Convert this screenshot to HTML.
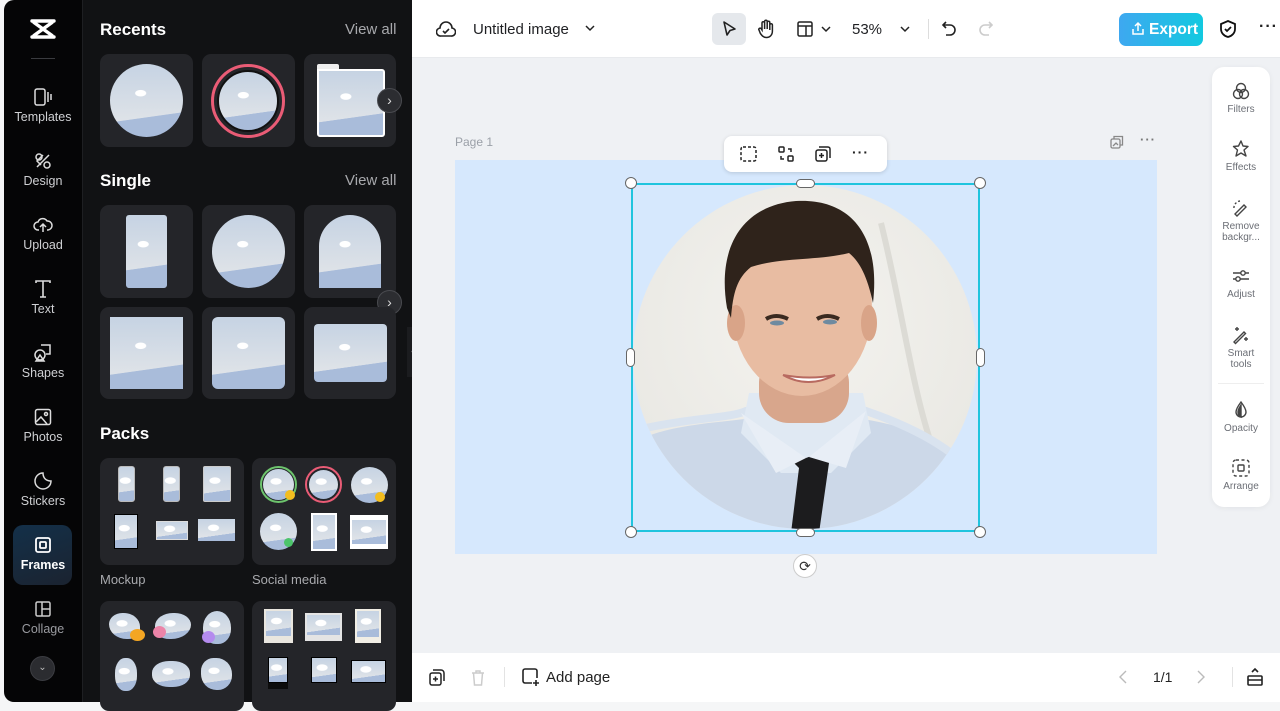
<!DOCTYPE html>
<html><head><meta charset="utf-8"><style>
*{box-sizing:border-box;margin:0;padding:0}
body{width:1280px;height:702px;overflow:hidden;background:#f5f6f7;font-family:"Liberation Sans",sans-serif;position:relative}
.abs{position:absolute}
#nav{left:4px;top:0;width:78px;height:702px;background:#050506;border-radius:10px 0 0 10px}
#panel{left:82px;top:0;width:330px;height:702px;background:#111214;border-left:1px solid #1e1f22}
.ni{position:absolute;left:0;width:78px;text-align:center;color:#cfd0d3;font-size:12.5px}
.ni svg{display:block;margin:0 auto 3px}
.card{position:absolute;background:#242529;border-radius:9px}
.sky{position:absolute;background:radial-gradient(ellipse 6px 3.5px at 42% 40%,#fff 85%,transparent 100%),linear-gradient(172deg,transparent 70%,#a9bcda 70.5%),linear-gradient(#c6d3e3,#e5e7e9);}
h2{position:absolute;color:#fff;font-size:17px;font-weight:bold}
.va{position:absolute;color:#a8a9ad;font-size:15px}
.arrow{position:absolute;width:25px;height:25px;border-radius:50%;background:#2c2d31;border:1px solid #4a4b50;color:#ddd;font-size:14px;text-align:center;line-height:22px}
#top{left:412px;top:0;width:868px;height:58px;background:#fff;border-bottom:1px solid #e8eaed}
#canvas{left:412px;top:58px;width:868px;height:595px;background:#eff1f4}
#bottom{left:412px;top:653px;width:868px;height:49px;background:#fff}
.rp{position:absolute;left:0;width:58px;text-align:center;font-size:10px;color:#6b6e75;line-height:11px}
.rp svg{display:block;margin:0 auto 3px}
.h{position:absolute;width:12px;height:12px;border-radius:50%;background:#fff;border:1px solid #666}
</style></head><body>

<div id="nav" class="abs">
  <svg class="abs" style="left:25px;top:18px" width="28" height="22" viewBox="0 0 28 22"><path d="M3 3h22M3 19h22M5 4.5L23 17.5M23 4.5L5 17.5" fill="none" stroke="#fff" stroke-width="3.4" stroke-linecap="round"/></svg>
  <div class="abs" style="left:27px;top:58px;width:24px;height:1px;background:#3a3b3f"></div>
  <div class="ni" style="top:87px"><svg width="20" height="20" viewBox="0 0 20 20" fill="none" stroke="#ddd" stroke-width="1.5"><rect x="2" y="2" width="10" height="16" rx="2"/><path d="M15 5v10M18 7v6"/></svg>Templates</div>
  <div class="ni" style="top:151px"><svg width="20" height="20" viewBox="0 0 20 20" fill="none" stroke="#ddd" stroke-width="1.5"><circle cx="6" cy="6" r="3"/><circle cx="14" cy="14" r="3"/><path d="M4 16L16 4M8 14l-4-4 6-6"/></svg>Design</div>
  <div class="ni" style="top:215px"><svg width="20" height="20" viewBox="0 0 20 20" fill="none" stroke="#ddd" stroke-width="1.5"><path d="M6 15H5a4 4 0 010-8 5 5 0 019-1 4 4 0 011 9h-1M10 17v-7M7 12l3-3 3 3"/></svg>Upload</div>
  <div class="ni" style="top:279px"><svg width="20" height="20" viewBox="0 0 20 20" fill="none" stroke="#ddd" stroke-width="1.6"><path d="M3 4V2h14v2M10 2v16M7 18h6"/></svg>Text</div>
  <div class="ni" style="top:343px"><svg width="20" height="20" viewBox="0 0 20 20" fill="none" stroke="#ddd" stroke-width="1.5"><circle cx="7" cy="12" r="5"/><path d="M8 2h9v9h-4M3 18l4-6 4 6z"/></svg>Shapes</div>
  <div class="ni" style="top:407px"><svg width="20" height="20" viewBox="0 0 20 20" fill="none" stroke="#ddd" stroke-width="1.5"><rect x="2.5" y="2.5" width="15" height="15" rx="2"/><circle cx="13" cy="7" r="1.5"/><path d="M3 15l5-5 6 7"/></svg>Photos</div>
  <div class="ni" style="top:471px"><svg width="20" height="20" viewBox="0 0 20 20" fill="none" stroke="#ddd" stroke-width="1.5"><path d="M10 2a8 8 0 108 8c-5 0-8-3-8-8z"/></svg>Stickers</div>
  <div class="abs" style="left:9px;top:525px;width:59px;height:60px;border-radius:10px;background:linear-gradient(160deg,#133049,#1b2330)"></div>
  <div class="ni" style="top:535px;color:#fff;font-weight:bold"><svg width="20" height="20" viewBox="0 0 20 20" fill="none" stroke="#fff" stroke-width="1.8"><rect x="3" y="3" width="14" height="14" rx="2"/><rect x="7" y="7" width="6" height="6" rx="1"/></svg>Frames</div>
  <div class="ni" style="top:599px;color:#9a9ba0"><svg width="20" height="20" viewBox="0 0 20 20" fill="none" stroke="#ccc" stroke-width="1.5"><rect x="3" y="3" width="14" height="14" rx="1.5"/><path d="M9 3v14M9 10h8"/></svg>Collage</div>
  <div class="abs" style="left:26px;top:656px;width:25px;height:25px;border-radius:50%;background:#2b2c30;border:1px solid #3c3d42;color:#bbb;font-size:10px;text-align:center;line-height:22px">&#8964;</div>
</div>

<div id="panel" class="abs">
  <h2 style="left:17px;top:20px">Recents</h2><div class="va" style="left:262px;top:21px">View all</div>
  <div class="card" style="left:17px;top:54px;width:93px;height:93px"><div class="sky" style="left:10px;top:10px;width:73px;height:73px;border-radius:50%"></div></div>
  <div class="card" style="left:119px;top:54px;width:93px;height:93px"><div style="position:absolute;left:9px;top:10px;width:74px;height:74px;border-radius:50%;border:3px solid #ea5c76"></div><div class="sky" style="left:15px;top:16px;width:62px;height:62px;border-radius:50%;border:2px solid #111"></div></div>
  <div class="card" style="left:221px;top:54px;width:92px;height:93px"><div style="position:absolute;left:13px;top:10px;width:22px;height:6px;background:#eee;border-radius:2px 2px 0 0"></div><div class="sky" style="left:13px;top:15px;width:68px;height:68px;border:2px solid #fff;border-radius:0 3px 3px 3px"></div></div>
  <div class="arrow" style="left:294px;top:88px">&#8250;</div>

  <h2 style="left:17px;top:171px">Single</h2><div class="va" style="left:262px;top:172px">View all</div>
  <div class="card" style="left:17px;top:205px;width:93px;height:93px"><div class="sky" style="top:10px;width:41px;height:73px;border-radius:3px;left:26px"></div></div>
  <div class="card" style="left:119px;top:205px;width:93px;height:93px"><div class="sky" style="left:10px;top:10px;width:73px;height:73px;border-radius:50%"></div></div>
  <div class="card" style="left:221px;top:205px;width:92px;height:93px"><div class="sky" style="left:15px;top:10px;width:62px;height:73px;border-radius:31px 31px 0 0"></div></div>
  <div class="arrow" style="left:294px;top:290px">&#8250;</div>
  <div class="card" style="left:17px;top:307px;width:93px;height:92px"><div class="sky" style="left:10px;top:10px;width:73px;height:72px"></div></div>
  <div class="card" style="left:119px;top:307px;width:93px;height:92px"><div class="sky" style="left:10px;top:10px;width:73px;height:72px;border-radius:6px"></div></div>
  <div class="card" style="left:221px;top:307px;width:92px;height:92px"><div class="sky" style="left:10px;top:17px;width:73px;height:58px;border-radius:4px"></div></div>

  <h2 style="left:17px;top:424px">Packs</h2>
  <div class="card" style="left:17px;top:458px;width:144px;height:107px">
    <div class="sky" style="left:18px;top:8px;width:17px;height:36px;border:1px solid #bbb;border-radius:3px"></div>
    <div class="sky" style="left:63px;top:8px;width:17px;height:36px;border:1px solid #bbb;border-radius:3px"></div>
    <div class="sky" style="left:103px;top:8px;width:28px;height:36px;border:1px solid #ccc;border-radius:2px"></div>
    <div class="sky" style="left:14px;top:56px;width:24px;height:35px;border:1px solid #000"></div>
    <div class="sky" style="left:56px;top:63px;width:32px;height:19px;border:1px solid #ddd"></div>
    <div class="sky" style="left:98px;top:61px;width:37px;height:22px"></div>
  </div>
  <div class="card" style="left:169px;top:458px;width:144px;height:107px">
    <div style="position:absolute;left:8px;top:8px;width:37px;height:37px;border-radius:50%;border:2px solid #6dc46d"></div><div class="sky" style="left:11px;top:11px;width:31px;height:31px;border-radius:50%"></div><div class="abs" style="left:33px;top:32px;width:10px;height:10px;border-radius:50%;background:#f3bd1f"></div>
    <div style="position:absolute;left:53px;top:8px;width:37px;height:37px;border-radius:50%;border:2px solid #ea5c76"></div><div class="sky" style="left:57px;top:12px;width:29px;height:29px;border-radius:50%"></div>
    <div class="sky" style="left:99px;top:9px;width:37px;height:36px;border-radius:50%"></div><div class="abs" style="left:123px;top:34px;width:10px;height:10px;border-radius:50%;background:#f3bd1f"></div>
    <div class="sky" style="left:8px;top:55px;width:37px;height:37px;border-radius:50%"></div><div class="abs" style="left:32px;top:80px;width:9px;height:9px;border-radius:50%;background:#4cc46a"></div>
    <div class="sky" style="left:59px;top:55px;width:26px;height:38px;border:2px solid #fff"></div>
    <div class="sky" style="left:98px;top:57px;width:38px;height:34px;border:3px solid #fff;border-width:5px 2px 5px 2px"></div>
  </div>
  <div class="abs" style="left:17px;top:572px;color:#a8a9ad;font-size:13px">Mockup</div>
  <div class="abs" style="left:169px;top:572px;color:#a8a9ad;font-size:13px">Social media</div>
  <div class="card" style="left:17px;top:601px;width:144px;height:110px">
    <div class="sky" style="left:9px;top:12px;width:31px;height:26px;border-radius:45% 55% 40% 60%"></div><div class="abs" style="left:30px;top:28px;width:15px;height:12px;border-radius:50%;background:#f4a623"></div>
    <div class="sky" style="left:55px;top:12px;width:36px;height:26px;border-radius:50% 45% 55% 40%"></div><div class="abs" style="left:53px;top:25px;width:13px;height:12px;border-radius:50%;background:#ec84a8"></div>
    <div class="sky" style="left:103px;top:10px;width:28px;height:33px;border-radius:50% 50% 45% 45%"></div><div class="abs" style="left:102px;top:30px;width:13px;height:12px;border-radius:50%;background:#b48bee"></div>
    <div class="sky" style="left:15px;top:57px;width:22px;height:33px;border-radius:45%"></div>
    <div class="sky" style="left:52px;top:60px;width:38px;height:26px;border-radius:45%"></div>
    <div class="sky" style="left:101px;top:57px;width:31px;height:32px;border-radius:40% 50% 45% 50%"></div>
  </div>
  <div class="card" style="left:169px;top:601px;width:144px;height:110px">
    <div class="sky" style="left:12px;top:8px;width:29px;height:34px;border:2px solid #e9e6df;border-bottom-width:7px"></div>
    <div class="sky" style="left:53px;top:12px;width:37px;height:28px;border:2px solid #e4e4e4;border-bottom-width:6px"></div>
    <div class="sky" style="left:103px;top:8px;width:26px;height:34px;border:2px solid #f1eee5;border-bottom-width:6px"></div>
    <div class="sky" style="left:16px;top:56px;width:20px;height:26px;border:1px solid #000"></div><div class="abs" style="left:16px;top:82px;width:20px;height:6px;background:#0c0c0c"></div>
    <div class="sky" style="left:59px;top:56px;width:26px;height:26px;border:1px solid #000"></div>
    <div class="sky" style="left:99px;top:59px;width:35px;height:23px;border:1px solid #000"></div>
  </div>
</div>
<div class="abs" style="left:407px;top:327px;width:11px;height:50px;background:#1b1c1f;border-radius:0 6px 6px 0;color:#777;font-size:10px;line-height:50px;text-align:center">&#8249;</div>

<div id="top" class="abs">
  <svg class="abs" style="left:24px;top:20px" width="20" height="18" viewBox="0 0 20 18" fill="none" stroke="#222" stroke-width="1.6"><path d="M5 16a4 4 0 01-1-8 6 6 0 0112 0 4 4 0 01-1 8z"/><path d="M7 11l2 2 4-4"/></svg>
  <div class="abs" style="left:61px;top:21px;font-size:15px;color:#1f2023">Untitled image</div>
  <svg class="abs" style="left:173px;top:25px" width="10" height="7" viewBox="0 0 10 7" fill="none" stroke="#222" stroke-width="1.5"><path d="M1 1l4 4 4-4"/></svg>
  <div class="abs" style="left:300px;top:13px;width:34px;height:32px;border-radius:6px;background:#e5e8ec"></div>
  <svg class="abs" style="left:309px;top:20px" width="16" height="18" viewBox="0 0 16 18" fill="none" stroke="#222" stroke-width="1.6" stroke-linejoin="round"><path d="M3 2l11 7-5 1.5L6 15z"/></svg>
  <svg class="abs" style="left:345px;top:19px" width="18" height="20" viewBox="0 0 18 20" fill="none" stroke="#222" stroke-width="1.5"><path d="M5 11V4a1.3 1.3 0 012.6 0v6V2.5a1.3 1.3 0 012.6 0V10V3.5a1.3 1.3 0 012.6 0V11V6a1.3 1.3 0 012.6 0v6c0 4-2.5 6.5-6 6.5-3 0-4.5-2-6-4L2 11c-.8-1 .8-2.5 2-1.5z"/></svg>
  <svg class="abs" style="left:385px;top:21px" width="16" height="16" viewBox="0 0 16 16" fill="none" stroke="#222" stroke-width="1.5"><rect x="1" y="1" width="14" height="14" rx="1.5"/><path d="M1 5h14M9 5v10"/></svg>
  <svg class="abs" style="left:409px;top:26px" width="10" height="7" viewBox="0 0 10 7" fill="none" stroke="#222" stroke-width="1.5"><path d="M1 1l4 4 4-4"/></svg>
  <div class="abs" style="left:440px;top:21px;font-size:15px;color:#1f2023">53%</div>
  <svg class="abs" style="left:488px;top:26px" width="10" height="7" viewBox="0 0 10 7" fill="none" stroke="#222" stroke-width="1.5"><path d="M1 1l4 4 4-4"/></svg>
  <div class="abs" style="left:516px;top:19px;width:1px;height:20px;background:#ddd"></div>
  <svg class="abs" style="left:529px;top:20px" width="16" height="18" viewBox="0 0 16 18" fill="none" stroke="#222" stroke-width="1.6"><path d="M5 2L2 5l3 3M2 5h7a5 5 0 010 10H5"/></svg>
  <svg class="abs" style="left:566px;top:20px" width="16" height="18" viewBox="0 0 16 18" fill="none" stroke="#ccc" stroke-width="1.6"><path d="M11 2l3 3-3 3M14 5H7a5 5 0 000 10h4"/></svg>
  <div class="abs" style="left:707px;top:13px;width:84px;height:33px;border-radius:7px;background:linear-gradient(90deg,#3ea8f0,#12c9e0);color:#fff;font-weight:bold;font-size:15.5px;line-height:33px;padding-left:30px">Export</div>
  <svg class="abs" style="left:719px;top:21px" width="14" height="15" viewBox="0 0 14 15" fill="none" stroke="#fff" stroke-width="1.5"><path d="M7 10V2M4 5l3-3 3 3M2 8v5h10V8"/></svg>
  <svg class="abs" style="left:807px;top:19px" width="18" height="20" viewBox="0 0 18 20" fill="none" stroke="#111" stroke-width="1.8"><path d="M9 2l7 3v5c0 4-3 7-7 8-4-1-7-4-7-8V5z"/><path d="M6 10l2 2 4-4"/></svg>
  <div class="abs" style="left:847px;top:18px;font-size:16px;color:#222;letter-spacing:1px;font-weight:bold">···</div>
</div>

<div id="canvas" class="abs">
  <div class="abs" style="left:43px;top:77px;font-size:12px;color:#9ba0a8">Page 1</div>
  <svg class="abs" style="left:698px;top:77px" width="14" height="14" viewBox="0 0 14 14" fill="none" stroke="#888" stroke-width="1.3"><rect x="1" y="4" width="9" height="9" rx="1.5"/><path d="M4 4V1.5h8.5V10H10M3 11l3-3 2 2"/></svg>
  <div class="abs" style="left:728px;top:74px;font-size:13px;color:#777;font-weight:bold;letter-spacing:1px">···</div>
  <div class="abs" style="left:43px;top:102px;width:702px;height:394px;background:#d6e8fd"></div>
  <svg class="abs" style="left:219px;top:125px" width="349" height="349" viewBox="0 0 349 349">
    <defs><clipPath id="c"><circle cx="174" cy="174" r="172"/></clipPath>
    <radialGradient id="bg" cx="50%" cy="40%" r="60%"><stop offset="0" stop-color="#f4f3ef"/><stop offset="1" stop-color="#e9e8e3"/></radialGradient></defs>
    <g clip-path="url(#c)">
      <rect width="349" height="349" fill="url(#bg)"/>
      <path d="M250 40 C270 120 280 200 300 260" stroke="#dcdbd5" stroke-width="6" fill="none"/>
      <path d="M0 260 C40 240 90 240 120 235 L225 235 C260 240 300 250 330 275 L349 349 L0 349Z" fill="#ccd8e8"/>
      <path d="M15 245 C60 235 100 235 115 228 L235 228 C270 240 300 255 320 270" stroke="#d9e3ef" stroke-width="8" fill="none"/>
      <path d="M118 210 L232 210 L240 250 L200 290 L150 290 L110 250Z" fill="#e0e9f3"/>
      <rect x="128" y="170" width="90" height="70" rx="30" fill="#d8a68c"/>
      <ellipse cx="171" cy="125" rx="70" ry="88" fill="#e8bca2"/>
      <ellipse cx="105" cy="140" rx="9" ry="18" fill="#d9a488"/>
      <ellipse cx="238" cy="140" rx="8" ry="18" fill="#d9a488"/>
      <path d="M96 125 C85 60 115 22 165 18 C218 15 250 50 242 120 C236 92 228 78 218 70 C185 78 150 74 120 84 C106 95 102 110 100 135Z" fill="#2f231b"/>
      <path d="M135 136 q10 -6 22 0 M186 136 q10 -6 22 0" stroke="#3a2a20" stroke-width="4" fill="none"/>
      <ellipse cx="146" cy="140" rx="7" ry="2.5" fill="#6e8aa0"/><ellipse cx="199" cy="139" rx="7" ry="2.5" fill="#6e8aa0"/>
      <path d="M152 192 q25 14 52 0 q-25 5 -52 0" fill="#fff" stroke="#b86a60" stroke-width="2"/>
      <path d="M148 265 L175 275 L210 262 L198 280 L188 350 L160 350 L168 285Z" fill="#1c1c1e"/>
      <path d="M110 230 L145 290 L175 275 Z M235 228 L215 285 L178 274Z" fill="#e8eef6"/>
    </g>
  </svg>
  <div class="abs" style="left:219px;top:125px;width:349px;height:349px;border:2px solid #20c4de"></div>
  <div class="h" style="left:213px;top:119px"></div><div class="h" style="left:562px;top:119px"></div>
  <div class="h" style="left:213px;top:468px"></div><div class="h" style="left:562px;top:468px"></div>
  <div class="h" style="left:384px;top:121px;width:19px;height:9px;border-radius:5px"></div>
  <div class="h" style="left:384px;top:470px;width:19px;height:9px;border-radius:5px"></div>
  <div class="h" style="left:214px;top:290px;width:9px;height:19px;border-radius:5px"></div>
  <div class="h" style="left:564px;top:290px;width:9px;height:19px;border-radius:5px"></div>
  <div class="abs" style="left:381px;top:496px;width:24px;height:24px;border-radius:50%;background:#fff;border:1px solid #ccc;text-align:center;line-height:22px;font-size:14px;color:#333">&#10227;</div>
  <div class="abs" style="left:312px;top:78px;width:163px;height:36px;background:#fff;border-radius:8px;box-shadow:0 1px 4px rgba(0,0,0,.15)">
    <svg class="abs" style="left:16px;top:10px" width="17" height="16" viewBox="0 0 17 16" fill="none" stroke="#222" stroke-width="1.5" stroke-dasharray="3 2"><rect x="1" y="1" width="15" height="14" rx="2"/></svg>
    <svg class="abs" style="left:54px;top:10px" width="16" height="16" viewBox="0 0 16 16" fill="none" stroke="#222" stroke-width="1.5"><rect x="1" y="1" width="5" height="5" rx="1"/><rect x="10" y="10" width="5" height="5" rx="1"/><path d="M10 3h3v3M6 13H3v-3"/></svg>
    <svg class="abs" style="left:91px;top:10px" width="16" height="16" viewBox="0 0 16 16" fill="none" stroke="#222" stroke-width="1.5"><rect x="1" y="4" width="11" height="11" rx="2"/><path d="M4 1h9a2 2 0 012 2v9M6.5 7v5M4 9.5h5"/></svg>
    <div class="abs" style="left:128px;top:8px;font-size:14px;font-weight:bold;color:#222;letter-spacing:1px">···</div>
  </div>
  <div class="abs" style="left:800px;top:9px;width:58px;height:440px;background:#fff;border-radius:12px;box-shadow:0 1px 6px rgba(0,0,0,.06)">
    <div class="rp" style="top:14px"><svg width="20" height="20" viewBox="0 0 20 20" fill="none" stroke="#444" stroke-width="1.4"><circle cx="10" cy="7" r="4.5"/><circle cx="7" cy="13" r="4.5"/><circle cx="13" cy="13" r="4.5"/></svg>Filters</div>
    <div class="rp" style="top:72px"><svg width="20" height="20" viewBox="0 0 20 20" fill="none" stroke="#444" stroke-width="1.4" stroke-linejoin="round"><path d="M10 2l2 5 5 .5-4 3.5 2 6-5-3-5 3 1.5-6-4-3.5 5-.5z"/></svg>Effects</div>
    <div class="rp" style="top:131px"><svg width="20" height="20" viewBox="0 0 20 20" fill="none" stroke="#444" stroke-width="1.4"><path d="M4 16l9-9 2 2-9 9z"/><path d="M9 3a7 7 0 00-6 8" stroke-dasharray="2 2"/></svg>Remove<br>backgr...</div>
    <div class="rp" style="top:199px"><svg width="20" height="20" viewBox="0 0 20 20" fill="none" stroke="#444" stroke-width="1.4"><path d="M2 7h16M2 13h16"/><circle cx="12" cy="7" r="2.2" fill="#fff"/><circle cx="7" cy="13" r="2.2" fill="#fff"/></svg>Adjust</div>
    <div class="rp" style="top:258px"><svg width="20" height="20" viewBox="0 0 20 20" fill="none" stroke="#444" stroke-width="1.4"><path d="M3 17l10-10 1.5 1.5-10 10zM6 2v4M4 4h4M15 12v4M13 14h4"/></svg>Smart<br>tools</div>
    <div class="abs" style="left:6px;top:316px;width:46px;height:1px;background:#eee"></div>
    <div class="rp" style="top:333px"><svg width="20" height="20" viewBox="0 0 20 20" fill="none" stroke="#444" stroke-width="1.4"><path d="M10 2c3 4 5 7 5 10a5 5 0 01-10 0c0-3 2-6 5-10z"/><path d="M10 17V5c-2 3-3 5-3 7s1 4 3 5z" fill="#444"/></svg>Opacity</div>
    <div class="rp" style="top:391px"><svg width="20" height="20" viewBox="0 0 20 20" fill="none" stroke="#444" stroke-width="1.4"><rect x="2" y="2" width="16" height="16" rx="3" stroke-dasharray="3 2.5"/><rect x="7" y="7" width="6" height="6" rx="1"/></svg>Arrange</div>
  </div>
</div>

<div id="bottom" class="abs">
  <svg class="abs" style="left:17px;top:16px" width="16" height="17" viewBox="0 0 16 17" fill="none" stroke="#222" stroke-width="1.5"><rect x="1" y="4" width="11" height="12" rx="2"/><path d="M4 1h8a3 3 0 013 3v8M6.5 7.5v5M4 10h5"/></svg>
  <svg class="abs" style="left:59px;top:16px" width="14" height="17" viewBox="0 0 14 17" fill="none" stroke="#ccc" stroke-width="1.5"><path d="M1 4h12M5 4V2h4v2M2.5 4l1 12h7l1-12"/></svg>
  <div class="abs" style="left:92px;top:14px;width:1px;height:20px;background:#e3e3e3"></div>
  <svg class="abs" style="left:110px;top:15px" width="18" height="19" viewBox="0 0 18 19" fill="none" stroke="#222" stroke-width="1.6"><path d="M10 15H3a2 2 0 01-2-2V3a2 2 0 012-2h10a2 2 0 012 2v7M14 12v6M11 15h6"/></svg>
  <div class="abs" style="left:134px;top:16px;font-size:15px;color:#222">Add page</div>
  <svg class="abs" style="left:707px;top:17px" width="8" height="14" viewBox="0 0 8 14" fill="none" stroke="#bbb" stroke-width="1.4"><path d="M7 1L1 7l6 6"/></svg>
  <div class="abs" style="left:741px;top:16px;font-size:14px;color:#222">1/1</div>
  <svg class="abs" style="left:785px;top:17px" width="8" height="14" viewBox="0 0 8 14" fill="none" stroke="#bbb" stroke-width="1.4"><path d="M1 1l6 6-6 6"/></svg>
  <div class="abs" style="left:820px;top:14px;width:1px;height:20px;background:#e3e3e3"></div>
  <svg class="abs" style="left:834px;top:14px" width="18" height="20" viewBox="0 0 18 20" fill="none" stroke="#222" stroke-width="1.6"><rect x="2" y="9" width="14" height="9" rx="1"/><path d="M2 13h14M6 5l3-3 3 3"/></svg>
</div>
</body></html>
